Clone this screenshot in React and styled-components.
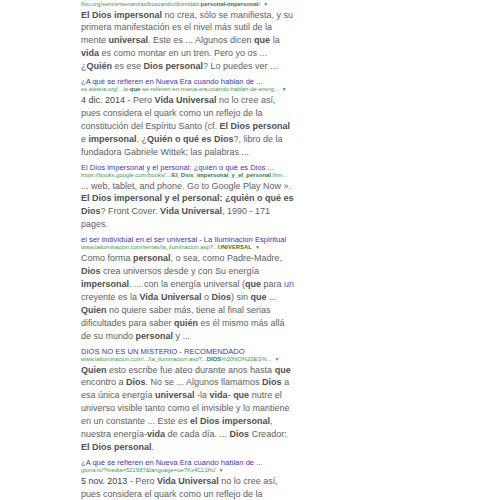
import React from 'react';
import styled, { createGlobalStyle } from 'styled-components';

const GlobalStyle = createGlobalStyle`
  html, body {
    margin: 0;
    padding: 0;
    background: #ffffff;
  }
  body {
    font-family: "Liberation Sans", Arial, sans-serif;
  }
`;

const Page = styled.div`
  width: 500px;
  height: 500px;
  overflow: hidden;
  background: #ffffff;
  padding: 0.5px 0 0 81px;
  box-sizing: border-box;
`;

const Result = styled.div`
  display: flex;
  flex-direction: column;
  margin-bottom: 5px;
`;

const Title = styled.div`
  font-size: 7.6px;
  line-height: 8px;
  color: #4436b4;
  white-space: nowrap;
`;

const Url = styled.div`
  font-size: 5.9px;
  line-height: 7px;
  color: #3d9a4f;
  white-space: nowrap;

  b {
    color: #2f7a3c;
    font-weight: bold;
  }

  .arrow {
    font-size: 5px;
    margin-left: 3px;
    color: #3d9a4f;
  }
`;

const Snippet = styled.div`
  margin-top: 1px;
  font-size: 9px;
  line-height: 12.9px;
  color: #606060;
  white-space: nowrap;

  b {
    color: #4f4f4f;
    font-weight: bold;
  }

  .date {
    color: #444444;
  }
`;

function UrlLine({ children, arrow = true }) {
  return (
    <Url>
      {children}
      {arrow && <span className="arrow">▼</span>}
    </Url>
  );
}

export default function App() {
  return (
    <>
      <GlobalStyle />
      <Page>
        <Result>
          <UrlLine>lfsu.org/sem/ensenanzas/buscando/divinidad-<b>personal-impersonal</b>/</UrlLine>
          <Snippet>
            <b>El Dios impersonal</b> no crea, sólo se manifiesta, y su<br />
            primera manifestación es el nivel más sutil de la<br />
            mente <b>universal</b>. Este es ... Algunos dicen <b>que</b> la<br />
            <b>vida</b> es como montar en un tren. Pero yo os ...<br />
            ¿<b>Quién</b> es ese <b>Dios personal</b>? Lo puedes ver ...
          </Snippet>
        </Result>

        <Result>
          <Title>¿A qué se refieren en Nueva Era cuando hablan de ...</Title>
          <UrlLine>es.aleteia.org/.../a-<b>que</b>-se-refieren-en-nueva-era-cuando-hablan-de-energ...</UrlLine>
          <Snippet>
            <span className="date">4 dic. 2014</span> - Pero <b>Vida Universal</b> no lo cree así,<br />
            pues considera el quark como un reflejo de la<br />
            constitución del Espíritu Santo (cf. <b>El Dios personal</b><br />
            e <b>impersonal</b>. ¿<b>Quién o qué es Dios</b>?, libro de la<br />
            fundadora Gabriele Wittek; las palabras ...
          </Snippet>
        </Result>

        <Result>
          <Title>El Dios impersonal y el personal: ¿quién o qué es Dios ...</Title>
          <UrlLine arrow={false}>https://books.google.com/books/.../<b>El_Dios_impersonal_y_el_personal</b>.htm...</UrlLine>
          <Snippet>
            ... web, tablet, and phone. Go to Google Play Now ».<br />
            <b>El Dios impersonal y el personal: ¿quién o qué es</b><br />
            <b>Dios</b>? Front Cover. <b>Vida Universal</b>, 1990 - 171<br />
            pages.
          </Snippet>
        </Result>

        <Result>
          <Title>el ser individual en el ser universal - La Iluminacion Espiritual</Title>
          <UrlLine>www.lailuminacion.com/temas/la_iluminacion.asp?...<b>UNIVERSAL</b></UrlLine>
          <Snippet>
            Como forma <b>personal</b>, o sea, como Padre-Madre,<br />
            <b>Dios</b> crea universos desde y con Su energía<br />
            <b>impersonal</b>. ... con la energía universal (<b>que</b> para un<br />
            creyente es la <b>Vida Universal</b> o <b>Dios</b>) sin <b>que</b> ...<br />
            <b>Quien</b> no quiere saber más, tiene al final serias<br />
            dificultades para saber <b>quién</b> es él mismo más allá<br />
            de su mundo <b>personal</b> y ...
          </Snippet>
        </Result>

        <Result>
          <Title>DIOS NO ES UN MISTERIO - RECOMENDADO</Title>
          <UrlLine>www.lailuminacion.com/.../la_iluminacion.asp?...<b>DIOS</b>%20NO%20ES%...</UrlLine>
          <Snippet>
            <b>Quien</b> esto escribe fue ateo durante anos hasta <b>que</b><br />
            encontro a <b>Dios</b>. No se ... Algunos llamamos <b>Dios</b> a<br />
            esa única energía <b>universal</b> -la <b>vida</b>- <b>que</b> nutre el<br />
            universo visible tanto como el invisible y lo mantiene<br />
            en un constante ... Este es <b>el Dios impersonal</b>,<br />
            nuestra energía-<b>vida</b> de cada día. ... <b>Dios</b> Creador:<br />
            <b>El Dios personal</b>.
          </Snippet>
        </Result>

        <Result>
          <Title>¿A qué se refieren en Nueva Era cuando hablan de ...</Title>
          <UrlLine>gloria.tv/?media=521987&amp;language=oe7Kx4CL1hU</UrlLine>
          <Snippet>
            <span className="date">5 nov. 2013</span> - Pero <b>Vida Universal</b> no lo cree así,<br />
            pues considera el quark como un reflejo de la
          </Snippet>
        </Result>
      </Page>
    </>
  );
}
